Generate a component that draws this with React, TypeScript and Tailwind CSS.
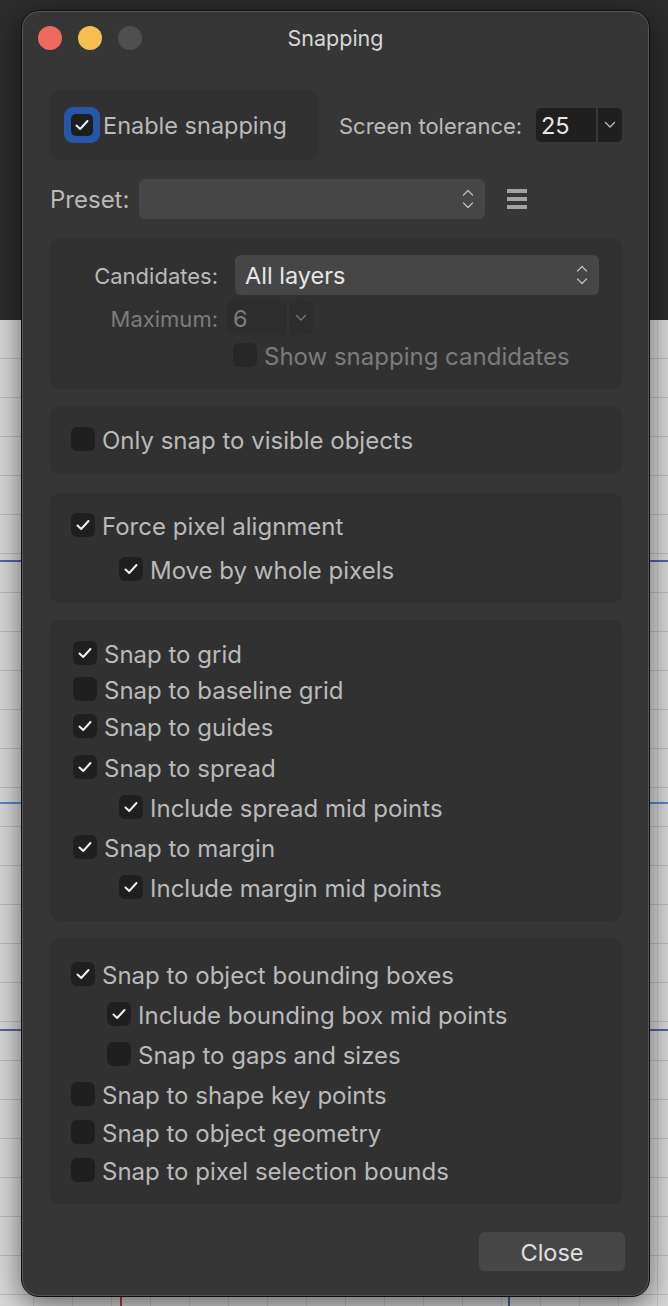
import React from "react";

const font = { fontFamily: "Inter, 'Noto Sans', sans-serif" };

function Check({ checked, dim }: { checked?: boolean; dim?: boolean }) {
  return (
    <div className={`w-[24px] h-[24px] rounded-[6px] flex items-center justify-center shrink-0 ${dim ? "bg-[#272727]" : "bg-[#1f1f1f]"}`}>
      {checked && (
        <svg width="24" height="24" viewBox="0 0 24 24" fill="none">
          <path d="M6.5 12.5 L10.2 16 L17.5 8" stroke="#f2f2f2" strokeWidth="2" strokeLinecap="round" strokeLinejoin="round" />
        </svg>
      )}
    </div>
  );
}

function Row({
  label,
  checked,
  indent,
  mt,
  dim,
}: {
  label: string;
  checked?: boolean;
  indent: string;
  mt: string;
  dim?: boolean;
}) {
  return (
    <div className={`flex items-center h-[24px] ${indent} ${mt}`}>
      <Check checked={checked} dim={dim} />
      <span className={`ml-[7px] text-[24px] leading-[24px] ${dim ? "text-[#7c7c7c]" : "text-[#bababa]"} whitespace-nowrap pt-[3px]`}>{label}</span>
    </div>
  );
}

function Chevron({ color = "#bdbdbd" }: { color?: string }) {
  return (
    <svg width="12" height="8" viewBox="0 0 12 8" fill="none">
      <path d="M1.5 1.5 L6 6 L10.5 1.5" stroke={color} strokeWidth="1.3" strokeLinecap="round" strokeLinejoin="round" />
    </svg>
  );
}

function UpDown() {
  return (
    <svg width="12" height="22" viewBox="0 0 12 22" fill="none">
      <path d="M1.5 7 L6 2.5 L10.5 7" stroke="#bdbdbd" strokeWidth="1.3" strokeLinecap="round" strokeLinejoin="round" />
      <path d="M1.5 15 L6 19.5 L10.5 15" stroke="#bdbdbd" strokeWidth="1.3" strokeLinecap="round" strokeLinejoin="round" />
    </svg>
  );
}

export default function App() {
  return (
    <div className="relative w-[668px] h-[1306px] overflow-hidden flex flex-col" style={font}>
      {/* background: app chrome + canvas */}
      <div className="h-[320px] bg-[#2c2c2c] shrink-0" />
      <div className="flex-1 bg-[#d9d9d9] bg-[linear-gradient(to_bottom,transparent_38px,#bdbdbd_38px,#bdbdbd_39px,transparent_39px),linear-gradient(to_right,transparent_38px,#c4c4c4_38px,#c4c4c4_39px,transparent_39px)] bg-[size:39px_39px] bg-[position:0_0,34px_0]" />
      <div className="absolute left-0 right-0 top-[560px] h-[2px] bg-[#5663a6]" />
      <div className="absolute left-0 right-0 top-[802px] h-[2px] bg-[#5a88c8]" />
      <div className="absolute left-0 right-0 top-[1029px] h-[2px] bg-[#5663a6]" />
      <div className="absolute left-[120px] top-[1280px] bottom-0 w-[2px] bg-[#b8344c]" />
      <div className="absolute left-[508px] top-[1280px] bottom-0 w-[2px] bg-[#4b5aa8]" />

      {/* dialog window */}
      <div className="absolute left-[21px] top-[10px] w-[629px] h-[1287px] rounded-[18px] bg-[#363636] border border-[#101010] shadow-[inset_0_0_0_1px_#565656,0_8px_30px_rgba(0,0,0,0.55)] flex flex-col">
        {/* title bar */}
        <div className="relative h-[54px] flex items-center pl-[16px] gap-[16px] shrink-0">
          <div className="w-[24px] h-[24px] rounded-full bg-[#ee6a5f]" />
          <div className="w-[24px] h-[24px] rounded-full bg-[#f5be4f]" />
          <div className="w-[24px] h-[24px] rounded-full bg-[#4f4f4f]" />
          <div className="absolute inset-0 flex items-center justify-center text-[21.5px] text-[#d6d6d6] pt-[1px]">Snapping</div>
        </div>

        <div className="flex flex-col pl-[28px] pr-[27px]">
          {/* enable row */}
          <div className="flex items-center mt-[25px]">
            <div className="w-[268px] h-[70px] rounded-[10px] bg-[#313131] flex items-center pl-[14px]">
              <div className="w-[36px] h-[36px] rounded-[9px] bg-[#2556a8] flex items-center justify-center">
                <div className="w-[22px] h-[22px] rounded-[5px] bg-[#1e1e1e] flex items-center justify-center">
                  <svg width="22" height="22" viewBox="0 0 22 22" fill="none">
                    <path d="M5.5 11.5 L9.2 15 L16.5 7" stroke="#f2f2f2" strokeWidth="2" strokeLinecap="round" strokeLinejoin="round" />
                  </svg>
                </div>
              </div>
              <span className="ml-[3px] text-[23.5px] text-[#bababa] whitespace-nowrap pt-[2px]">Enable snapping</span>
            </div>
            <span className="ml-[21px] text-[22px] text-[#bababa] whitespace-nowrap pt-[2px]">Screen tolerance:</span>
            <div className="ml-auto w-[86px] h-[34px] rounded-[5px] bg-[#1f1f1f] flex overflow-hidden">
              <div className="w-[60px] flex items-center pl-[5px] text-[23.5px] text-[#e6e6e6] pt-[2px]">25</div>
              <div className="w-[2px] bg-[#383838]" />
              <div className="flex-1 flex items-center justify-center">
                <Chevron />
              </div>
            </div>
          </div>

          {/* preset row */}
          <div className="flex items-center mt-[19px] h-[40px]">
            <span className="text-[24px] text-[#bababa] w-[89px] pt-[2px]">Preset:</span>
            <div className="w-[346px] h-[40px] rounded-[6px] bg-[#464646] flex items-center justify-end pr-[11px]">
              <UpDown />
            </div>
            <div className="ml-[22px] w-[20px] flex flex-col gap-[4px]">
              <div className="h-[4px] bg-[#a3a3a3]" />
              <div className="h-[4px] bg-[#a3a3a3]" />
              <div className="h-[4px] bg-[#a3a3a3]" />
            </div>
          </div>

          {/* candidates box */}
          <div className="mt-[19px] h-[151px] rounded-[10px] bg-[#313131] flex flex-col pt-[17px]">
            <div className="flex items-center h-[40px]">
              <span className="w-[168px] text-right text-[22px] text-[#bababa] pt-[2px]">Candidates:</span>
              <div className="ml-[17px] w-[364px] h-[40px] rounded-[6px] bg-[#464646] flex items-center pl-[10px] pr-[11px]">
                <span className="flex-1 text-[23.5px] text-[#e6e6e6] pt-[2px]">All layers</span>
                <UpDown />
              </div>
            </div>
            <div className="flex items-center h-[34px] mt-[6px]">
              <span className="w-[168px] text-right text-[22px] text-[#7c7c7c] pt-[2px]">Maximum:</span>
              <div className="ml-[9px] w-[86px] h-[34px] rounded-[5px] bg-[#2d2d2d] flex overflow-hidden">
                <div className="w-[60px] flex items-center pl-[6px] text-[23.5px] text-[#7c7c7c] pt-[2px]">6</div>
                <div className="w-[2px] bg-[#333333]" />
                <div className="flex-1 flex items-center justify-center">
                  <Chevron color="#777777" />
                </div>
              </div>
            </div>
            <Row label="Show snapping candidates" indent="ml-[183px]" mt="mt-[8px]" dim />
          </div>

          {/* only visible */}
          <div className="mt-[17px] rounded-[10px] bg-[#313131] flex flex-col pt-[21px] pb-[23px]">
            <Row label="Only snap to visible objects" indent="ml-[21px]" mt="mt-0" />
          </div>

          {/* pixel alignment */}
          <div className="mt-[19px] rounded-[10px] bg-[#313131] flex flex-col pt-[20px] pb-[22px]">
            <Row label="Force pixel alignment" checked indent="ml-[21px]" mt="mt-0" />
            <Row label="Move by whole pixels" checked indent="ml-[69px]" mt="mt-[20px]" />
          </div>

          {/* grid etc */}
          <div className="mt-[17px] rounded-[10px] bg-[#313131] flex flex-col pt-[21px] pb-[22px]">
            <Row label="Snap to grid" checked indent="ml-[23px]" mt="mt-0" />
            <Row label="Snap to baseline grid" indent="ml-[23px]" mt="mt-[12px]" />
            <Row label="Snap to guides" checked indent="ml-[23px]" mt="mt-[13px]" />
            <Row label="Snap to spread" checked indent="ml-[23px]" mt="mt-[17px]" />
            <Row label="Include spread mid points" checked indent="ml-[69px]" mt="mt-[16px]" />
            <Row label="Snap to margin" checked indent="ml-[23px]" mt="mt-[16px]" />
            <Row label="Include margin mid points" checked indent="ml-[69px]" mt="mt-[16px]" />
          </div>

          {/* objects */}
          <div className="mt-[17px] rounded-[10px] bg-[#313131] flex flex-col pt-[24px] pb-[22px]">
            <Row label="Snap to object bounding boxes" checked indent="ml-[21px]" mt="mt-0" />
            <Row label="Include bounding box mid points" checked indent="ml-[57px]" mt="mt-[16px]" />
            <Row label="Snap to gaps and sizes" indent="ml-[57px]" mt="mt-[16px]" />
            <Row label="Snap to shape key points" indent="ml-[21px]" mt="mt-[16px]" />
            <Row label="Snap to object geometry" indent="ml-[21px]" mt="mt-[14px]" />
            <Row label="Snap to pixel selection bounds" indent="ml-[21px]" mt="mt-[14px]" />
          </div>

          {/* close */}
          <div className="flex justify-end mt-[28px]">
            <div className="w-[146px] h-[39px] mr-[-3px] rounded-[6px] bg-[#474747] flex items-center justify-center text-[23.5px] text-[#e0e0e0] pt-[2px]">
              Close
            </div>
          </div>
        </div>
      </div>
    </div>
  );
}
